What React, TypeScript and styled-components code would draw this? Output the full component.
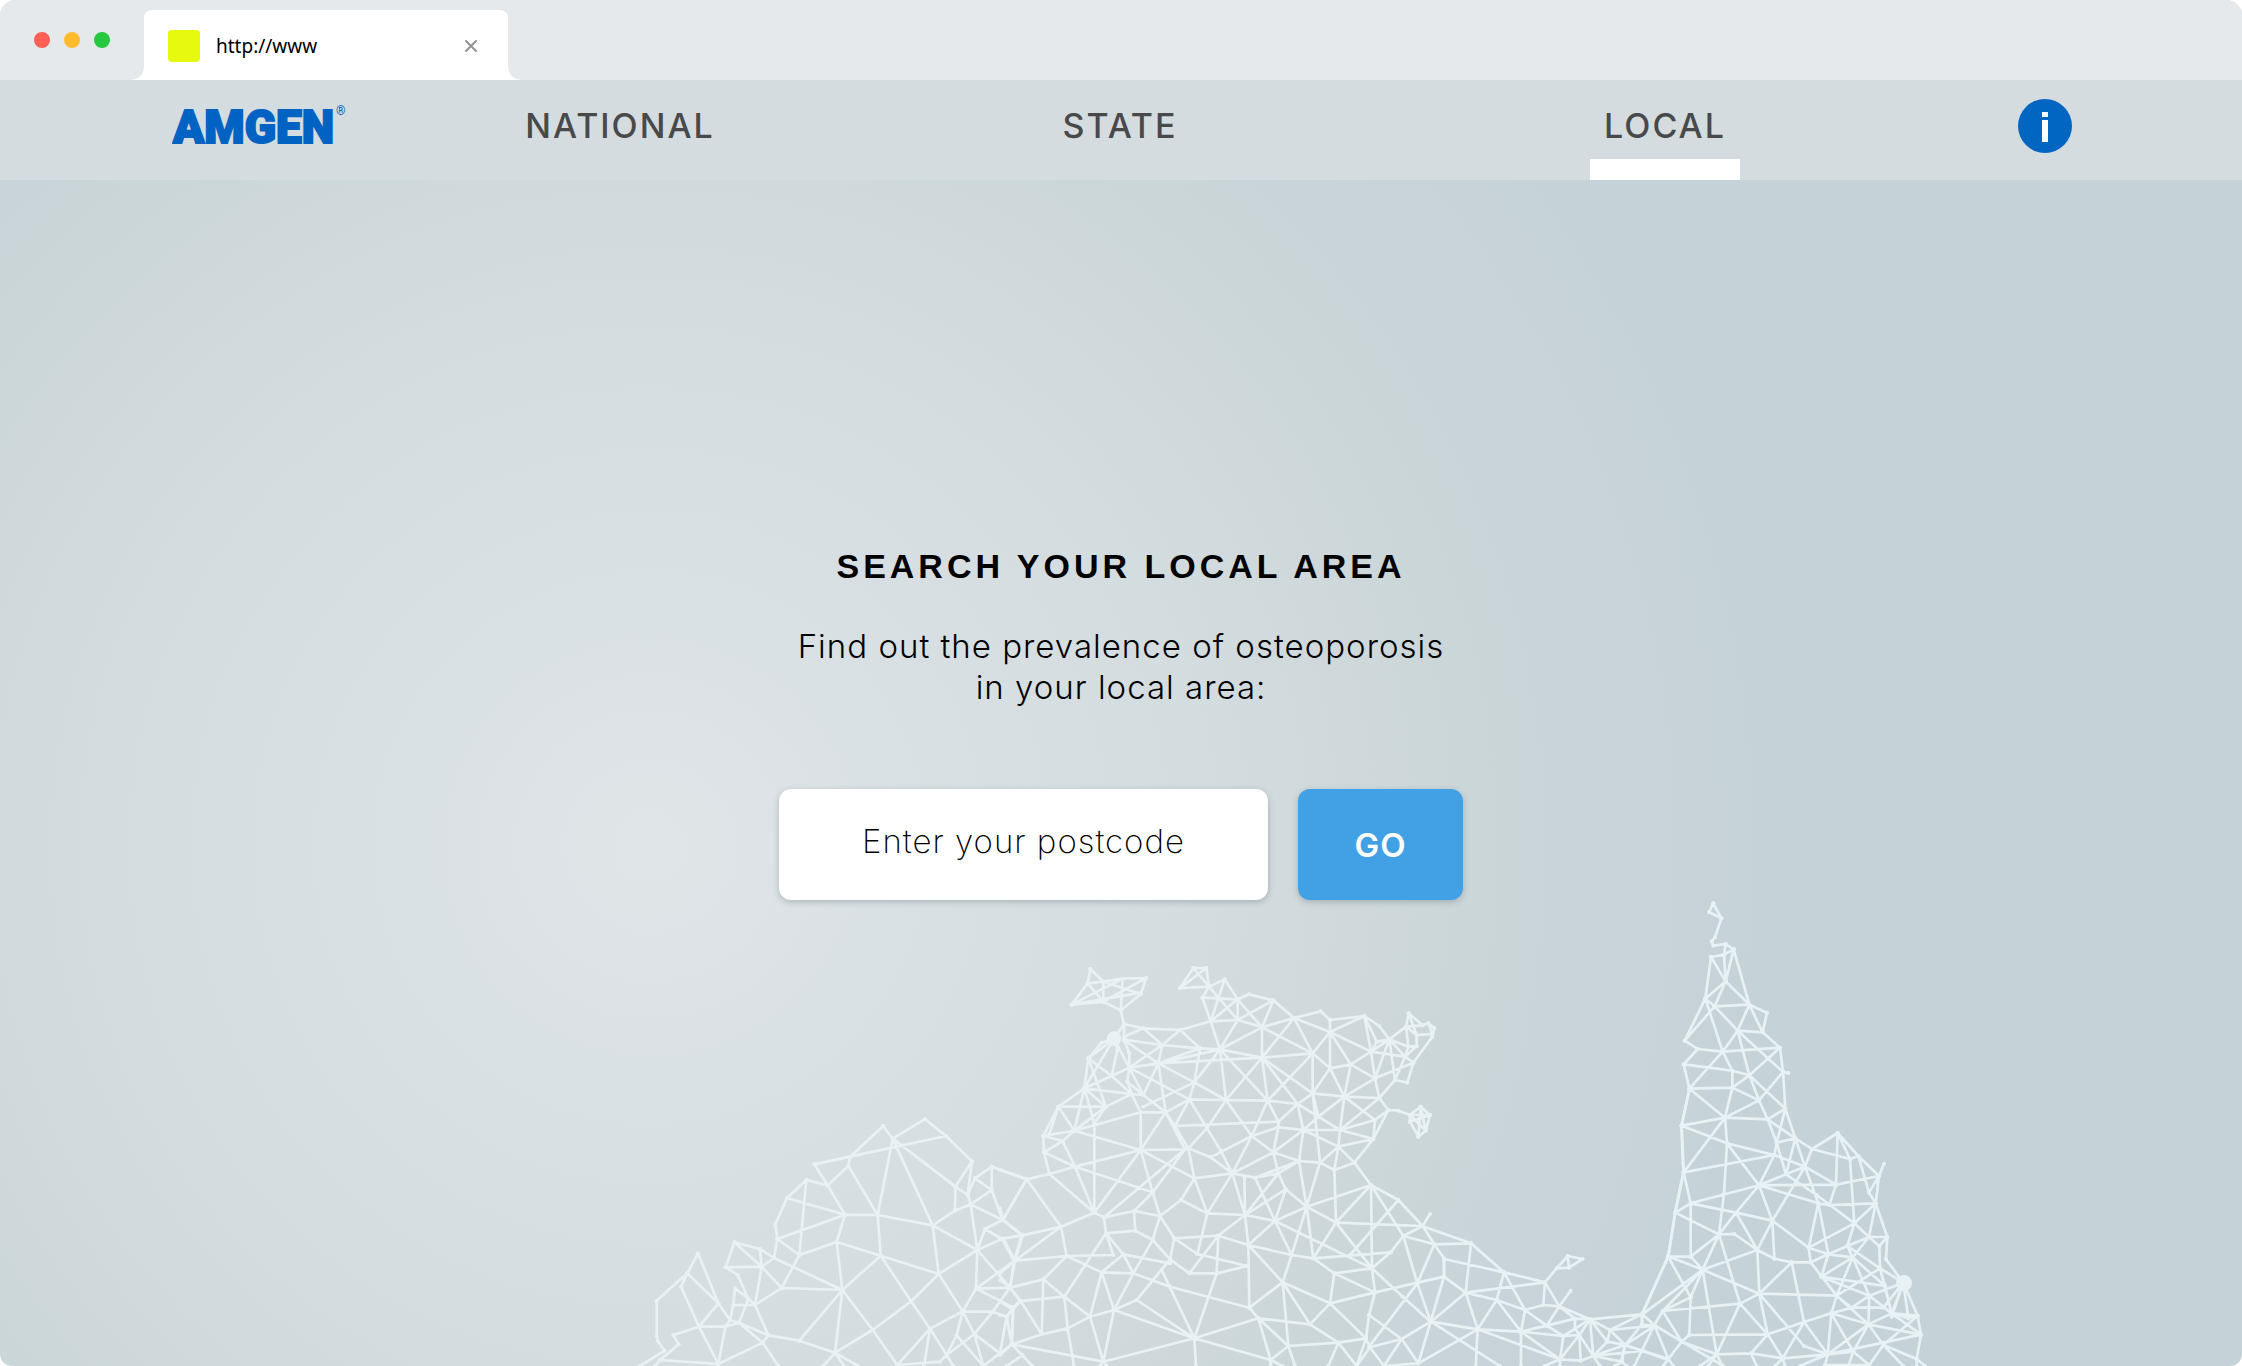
import React from "react";
import styled, { createGlobalStyle } from "styled-components";

const GlobalStyle = createGlobalStyle`
  *, *::before, *::after { box-sizing: border-box; }
  body { margin: 0; background: #ffffff; }
`;

const sans = `Inter, "Liberation Sans", Arial, sans-serif`;
const grotesk = `"Liberation Sans", Arial, sans-serif`;

const Window = styled.div`
  position: relative;
  display: flex;
  flex-direction: column;
  min-height: 100vh;
  overflow: hidden;
  border-radius: 16px 16px 12px 12px;
  background: radial-gradient(
    circle 50vw at 29% 62%,
    #e0e5e8 0%,
    #d9e0e3 25%,
    #d3dcdf 50%,
    #cbd6d8 74%,
    #c9d4da 84%,
    #c5d2d8 100%
  );
  font-family: ${sans};
  color: #000000;
`;

const TabStrip = styled.div`
  display: flex;
  align-items: flex-end;
  height: 80px;
  padding-left: 34px;
  background: #e5e9ec;
`;

const Lights = styled.div`
  display: flex;
  gap: 14px;
  align-self: center;
  width: 110px;
`;

const Light = styled.span<{ $color: string }>`
  width: 16px;
  height: 16px;
  border-radius: 50%;
  background: ${(p) => p.$color};
`;

const Tab = styled.div`
  position: relative;
  display: flex;
  align-items: center;
  gap: 16px;
  width: 364px;
  height: 70px;
  padding: 20px 30px 18px 24px;
  border-radius: 8px 8px 0 0;
  background: #ffffff;

  &::before,
  &::after {
    content: "";
    position: absolute;
    bottom: 0;
    width: 12px;
    height: 12px;
  }
  &::before {
    right: 100%;
    background: radial-gradient(circle at 0 0, transparent 11px, #ffffff 12px);
  }
  &::after {
    left: 100%;
    background: radial-gradient(circle at 100% 0, transparent 11px, #ffffff 12px);
  }
`;

const Favicon = styled.span`
  width: 32px;
  height: 32px;
  border-radius: 4px;
  background: #e6f90f;
`;

const TabTitle = styled.span`
  flex: 1;
  font-family: "Noto Sans", "Open Sans", sans-serif;
  font-size: 19px;
  line-height: 28px;
`;

const IconButton = styled.button`
  display: flex;
  padding: 0;
  border: 0;
  background: none;
  cursor: pointer;
`;

const Header = styled.header`
  display: grid;
  grid-template-columns: 198fr 500fr 500fr 590fr 112fr;
  align-items: stretch;
  height: 100px;
  padding: 0 170px 0 172px;
  background: #d5dcdf;
`;

const LogoLink = styled.a`
  display: flex;
  align-items: center;
  padding-bottom: 8px;
`;

const Nav = styled.nav`
  display: contents;
`;

const NavLink = styled.a<{ $active?: boolean }>`
  justify-self: center;
  display: flex;
  align-items: center;
  padding: 12px 14px 0;
  border-bottom: 21px solid ${(p) => (p.$active ? "#ffffff" : "transparent")};
  color: #48494a;
  font-size: 34px;
  font-weight: 500;
  letter-spacing: 2px;
  text-decoration: none;
`;

const InfoButton = styled(IconButton)`
  justify-self: end;
  align-self: center;
  padding-bottom: 8px;
`;

const Main = styled.main`
  position: relative;
  z-index: 1;
  display: flex;
  flex-direction: column;
  align-items: center;
  padding: 366px 24px 48px;
  text-align: center;
`;

const Title = styled.h1`
  margin: 0;
  font-family: ${grotesk};
  font-size: 34px;
  font-weight: 700;
  line-height: 40px;
  letter-spacing: 4px;
`;

const Intro = styled.p`
  margin: 40px 0 0;
  font-size: 33px;
  font-weight: 300;
  line-height: 41px;
  letter-spacing: 1px;
`;

const SearchForm = styled.form`
  display: flex;
  gap: 30px;
  margin-top: 81px;
`;

const Postcode = styled.input`
  width: 489px;
  height: 111px;
  padding: 0 24px 8px;
  border: 0;
  border-radius: 12px;
  background: #ffffff;
  box-shadow: 0 2px 6px rgba(60, 80, 90, 0.3);
  font-family: ${sans};
  font-size: 33px;
  font-weight: 200;
  letter-spacing: 1px;
  text-align: center;
  color: #000000;

  &::placeholder {
    color: #000000;
    opacity: 1;
  }
`;

const GoButton = styled.button`
  width: 165px;
  height: 111px;
  border: 0;
  border-radius: 12px;
  background: #42a0e4;
  box-shadow: 0 2px 6px rgba(60, 80, 90, 0.3);
  font-family: ${sans};
  font-size: 33px;
  font-weight: 600;
  letter-spacing: 1px;
  color: #ffffff;
  cursor: pointer;
`;

const MapArt = styled.svg`
  position: absolute;
  left: 0;
  bottom: 0;
  width: 100%;
  height: auto;
  fill: none;
  stroke: #e8f2f5;
  stroke-width: 8;
  stroke-linejoin: round;

  path {
    marker: url(#node);
  }
`;

const west =
  "M30,918L104,872L83,843L80,828L80,722L138,670L172,640L204,580L265,730L300,780" +
  "M172,640L153,680L207,800L265,730L172,640" +
  "M75,918L90,900L146,853L130,825L207,800L286,800L327,788L415,826L508,842L615,878L685,918" +
  "M90,900L265,912L207,800M265,912L286,800L300,780M265,912L398,848L327,788M398,848L445,918M398,848L415,826L375,735" +
  "M300,780L310,735L315,685L355,716L375,735L310,735M355,716L327,788L300,780M355,716L323,645L287,622L313,547L390,567L432,594" +
  "M287,622L395,620L313,547M390,567L395,620L432,594M395,620L455,684L375,735L395,620" +
  "M432,594L442,537L436,492L471,414L529,360L593,376L553,313L660,290L760,198L788,236L885,177L948,228L1026,304L1013,405" +
  "M660,290L948,228M660,290L655,318L593,376L645,464L471,414M645,464L442,537L508,585L529,360M655,318L743,465L645,464" +
  "L620,546L508,585L455,684L637,690L432,594M620,546L637,690M620,546L752,587L743,465L908,496L788,236L743,465" +
  "M788,236L976,380L1026,304M976,380L1013,405L1022,433L975,452L976,380M975,452L908,496L1042,570L1022,433" +
  "M908,496L926,642L752,587L637,690L508,842M637,690L615,878M637,690L728,810L615,878L580,918M615,878L642,918" +
  "M752,587L843,724L926,642M843,724L728,810L802,915M843,724L900,806L998,754L926,642L1042,570M802,915L900,806L882,918" +
  "M900,806L950,885M802,915L930,905L950,885L980,826L998,754L1038,686L1042,570" +
  "M1013,405L1035,355L1085,320L1190,357M1085,320L1085,390L1035,355M1085,390L1022,433L1118,480L1085,390M1118,480L1190,357" +
  "M1118,480L1065,507L1042,570L1116,537L1065,507M1118,480L1175,525L1116,537L1152,603L1175,525" +
  "M1152,603L1038,686L1140,683L1042,570M1152,603L1140,683L1170,722L1150,742L1038,686" +
  "M1140,683L1088,755L998,754L1033,822L1088,755L1130,770L1150,742L1145,850L1130,770L1110,880L1033,822L950,885" +
  "M980,826L1060,918L1033,822M950,885L970,918M1060,918L1145,853";

const north =
  "M271,87L310,125L368,116L438,114L423,162L362,211L310,185L215,194L263,130L271,87M263,130L310,125L310,185L263,130" +
  "M215,194L368,116L362,211L372,252M310,125L423,162M310,185L438,114M215,194L423,158" +
  "M540,144L580,84L619,84L627,140L540,144L619,84M580,84L627,140" +
  "M627,140L674,118L713,178L607,173L627,140L713,240M607,173L632,244L674,118" +
  "M632,244L713,178L747,163L820,181L882,234L962,214L990,240L1093,228L1138,258L1168,298" +
  "M713,178L713,240L632,244M713,240L820,181L786,262L713,178M713,240L786,262L882,234M713,240L660,328L632,244" +
  "M660,328L786,262L786,353L660,328M786,353L938,340L786,262M786,353L882,234L938,340L990,276L882,234M990,240L990,276L1093,228" +
  "M990,276L1113,335L1093,228L1130,305L1168,298L1113,335L1130,305M938,340L990,385L990,276L1052,373L990,385M1052,373L1113,335L1125,415L1052,373" +
  "M1113,335L1215,350L1168,298L1218,260L1226,220L1268,256L1285,250L1303,264L1297,290L1240,368L1222,428L1185,420L1138,474L1165,510L1195,512L1230,525" +
  "M1218,260L1250,285L1250,318L1215,350L1240,368M1226,220L1250,285L1297,282L1285,250M1218,260L1268,256M1168,298L1225,320L1250,318" +
  "M1168,298L1185,420L1215,350M1218,260L1225,320L1215,350M1168,298L1125,415L1240,368M1125,415L1138,474L1033,470L1125,415" +
  "M1052,373L1033,470L990,385L938,460L938,340M1033,470L938,460L786,353" +
  "M372,252L430,265L540,270L632,244M372,290L430,265L487,315L378,300M487,315L540,270L600,325L660,328M487,315L600,325" +
  "M487,315L475,370L372,300M487,315L388,383L475,370L600,325M475,370L660,328M475,370L786,353M475,370L583,427L600,325" +
  "M583,427L660,328L678,480L583,427L568,478L678,480M660,328L803,482L786,353L678,480L803,482L893,492L786,353" +
  "M938,340L803,482M893,492L938,460M475,370L497,517L568,478M475,370L430,465L388,383L568,478M583,427L430,500" +
  "M372,252L342,296L305,308L265,355L253,445L175,500L130,588L132,637L148,702L80,718L0,690" +
  "M372,252L372,300L388,340L388,383M342,296L265,355L335,408L352,330L342,296L253,445M265,355L318,500L253,445L335,408L388,383" +
  "M253,445L395,462L335,408M388,383L382,425L395,462L430,465L382,425M430,465L497,517M318,500L395,462L422,517L497,517" +
  "M342,296L388,383M175,500L318,500L223,572L175,500L148,583M253,445L223,572L130,588L188,603L132,637" +
  "M130,588L175,500M223,572L422,517M223,572L188,603L225,680L422,630L223,572M253,445L283,550L283,818L225,680L132,637M318,500L283,550" +
  "M422,517L422,630L497,517L525,558L568,478M497,517L555,628L422,630L583,715M225,680L148,702L283,818L422,630L458,757L225,680" +
  "M525,558L565,625L632,652L697,700M525,558L835,545M568,478L662,632L697,700M678,480L623,562L565,625" +
  "M678,480L755,588L803,482L835,545L893,492L910,570L835,562L755,588L632,652M835,545L835,562L820,637L755,588L697,700L820,637L910,570L955,530L893,492" +
  "M938,460L955,530L1020,570L1033,470L955,530M1033,470L1125,540L1120,597L1165,510L1125,540L1020,570L1120,597L1015,620L1020,570L910,570" +
  "M1138,474L1020,570M1015,620L910,570L897,663L820,637L835,700L765,713L697,700M938,460L960,668L897,663M960,668L1015,620L1003,690L960,668" +
  "M1015,620L1063,668L1003,690M1120,597L1063,668L1113,735L1195,780L1268,858M835,700L857,748L920,800L897,663L835,700M897,663L765,713" +
  "M857,748L735,825L835,700M960,668L920,800L1113,735M1003,690L1008,848L920,800M1113,735L1008,848L1268,858M1113,735L1116,985" +
  "M1113,735L1210,888L1268,858L1290,822M1195,780L1050,945M1268,858L1303,913L1210,888L1172,937L1116,985" +
  "M1303,913L1332,955L1332,1010M1303,913L1252,1030L1107,1220M1210,888L1252,1030L1292,1145L1332,1010L1125,1057M1116,985L1208,1070L1292,1145" +
  "M1008,848L1116,985M920,800L940,955L1008,848M920,800L825,843L735,825M857,748L825,843L765,713M825,843L875,945L920,800" +
  "M825,843L1116,985M825,843L745,915L655,887L735,825L622,820L697,700L583,715M697,700L735,825L745,915M733,710L735,825" +
  "M565,625L583,715L622,820L543,780L583,715M543,780L480,828L458,757L555,628M622,820L592,942" +
  "M458,757L402,813L312,832L283,818L183,860L68,886L0,897M480,828L402,813L406,872L318,880L312,832M480,828L523,895L655,887" +
  "M480,828L458,900L400,1000M406,872L458,900L510,958M312,832L555,628" +
  "M523,895L510,958L568,1000L650,1000L742,978L592,942L523,895M655,887L568,1000M655,887L650,1000L583,1195M745,915L748,1103" +
  "M510,970L370,943L318,880L340,945L200,948L183,860L80,718L8,840M183,860L45,962L10,895M200,948L130,1018L193,1070M125,1183L130,1018L30,1043" +
  "M200,948L45,962L68,886L10,840L0,805M45,962L30,1043M0,1000L45,962M318,880L193,1070L270,1130L305,997L200,948" +
  "M305,997L370,943L400,1000L305,997L342,1110L270,1130L203,1165L193,1070L62,1083L30,1043L0,1020M62,1083L125,1183M62,1083L38,1108L0,1085" +
  "M38,1108L20,1130L0,1125M38,1108L36,1215L20,1130M0,1245L36,1213L125,1183L203,1165L222,1278M36,1213L97,1278M36,1213L310,1265L270,1130" +
  "M310,1265L342,1110L410,1080L510,958M342,1110L583,1195L410,1080M400,1000L342,1110M370,943L400,1000L510,1040L748,1103" +
  "M485,990L583,1195L310,1265L320,1278M583,1195L588,1278M583,1195L775,1135L748,1103M583,1195L812,1260M68,1245L20,1278M310,1265L300,1278" +
  "M745,915L875,945L940,955L1172,937M745,915L848,1027L875,945M748,1103L848,1027L930,1153L775,1135L812,1260L848,1278M812,1260V1278" +
  "M775,1135L865,1218L848,1027L990,1090L1125,1057L1003,1000L940,955M1003,1000L1116,985L1125,1057L1107,1125L1098,1195L1110,1222" +
  "M1003,1000L990,1090L930,1153L1015,1208L865,1218L812,1260M990,1090L1098,1195M865,1218L885,1278M1015,1208L1098,1195L1070,1278M985,1278L1015,1208L1070,1278" +
  "M1110,1222L1070,1278M1110,1222L1152,1278L1205,1197L1107,1125M1110,1222L1205,1197L1292,1145M1205,1197L1255,1270L1292,1145" +
  "M1255,1270L1152,1278" +
  "M1230,525L1262,500L1290,525L1277,572L1255,590L1230,545L1230,525L1290,525L1230,545M1262,500L1255,590M1262,500L1277,572L1230,525";

const gulf =
  "M186,438L333,490L432,577L555,607L598,679L690,718L845,703L926,528L945,398L970,277L964,137L990,20" +
  "M223,493L333,490L317,638L252,590L252,537L432,577L410,660L317,638L213,725L353,748L317,638" +
  "M353,748L175,850M213,725L420,858M317,638L555,607L550,675L598,679M432,577L495,690L550,675M410,660L495,690L483,755L410,660L353,748L483,755L610,768" +
  "M483,755L600,838M495,690L560,737L598,679M483,755L560,737L645,716L645,745L658,765L610,768L560,737M610,768L600,838L353,748L347,858M483,755V858" +
  "M645,716L690,718L658,765L700,828L690,718L610,768M658,765L600,838L553,858M658,765L662,842L600,838V858M700,828L662,842" +
  "M598,679L645,716M632,632L598,679M555,607L590,565L623,528L668,537L627,563L590,565M623,528L627,563" +
  "M690,718L742,785L750,750L690,718M795,795L742,785L700,828L795,795L750,750L885,737" +
  "M700,828L785,845L795,795L925,840M700,828L720,858M785,845L765,858M785,845L800,858M850,812L700,828M750,750L845,703L845,735L885,737L795,795L845,735";

const cape =
  "M340,70L327,96L364,115L340,70M364,115L345,172L335,184L340,197L377,192L401,208L448,374L501,398L488,457L540,503L549,576L565,579" +
  "M549,576L556,686L586,775L636,807L713,759L775,828L837,888L852,851M837,888L827,970L862,1071L858,1138L910,1208L953,1307L963,1364L950,1437L975,1458M950,1437V1458" +
  "M401,208L372,224L333,231L316,356L254,482L293,507L251,553L268,626L245,737L251,877L226,998L204,1129L127,1303" +
  "M377,192L372,224L377,304L401,208M377,304L333,231M316,356L377,304L448,374L344,379L316,356M377,304L344,379L254,482" +
  "M316,356L368,515L413,452L448,374L488,457L413,452L344,379M293,507L368,515L540,503L448,586L413,452L549,576" +
  "M368,515L268,626L397,623L397,572L251,553M368,515L397,572L448,586L397,623L477,661L448,586L556,686M549,576L477,661L375,713L397,623" +
  "M268,626L375,713L245,737L381,790L375,713L503,718L477,661M503,718L556,686L530,788L586,775L503,718L530,788L558,883L586,775L615,860L523,825L381,790L477,916L558,883" +
  "M251,877L375,713M251,877L523,825L530,788M251,877L272,970L226,998L357,1063M381,790L372,940L357,1063" +
  "M523,825L477,916L272,970L408,998L477,916L517,1022L408,998L357,1063L403,1062L472,1110L408,998" +
  "M272,970L272,1130L204,1129L308,1169L272,1130L357,1063L308,1169L472,1110L517,1022L626,1103L685,1123M517,1022L523,1136L472,1110L478,1241L575,1147L523,1136" +
  "M517,1022L615,860L636,807L750,837L775,828M615,860L655,970M615,860L558,883L650,945L763,1030L827,970L688,975L655,970L477,916L708,914L713,759L750,837L763,1030L626,1103L655,970L685,1123" +
  "L758,1132L742,1098L763,1030L807,1071L827,970M708,914L615,860M708,914L837,888M708,914L688,975M775,828L807,938L827,970M807,938L837,888" +
  "M807,1071L862,1071L838,1098L807,1071L742,1098L840,1165L838,1098M807,1071L758,1132L664,1190L685,1123L632,1147L575,1147L612,1326L694,1300L710,1247L478,1241L420,1271" +
  "M308,1169L478,1241L503,1363L420,1271L188,1293L308,1169L272,1252L204,1129M127,1303L308,1169L350,1423L420,1271L357,1063" +
  "M272,1252L188,1293L163,1335L127,1303V1335H163M272,1252L268,1365L503,1363L548,1435L612,1326L503,1363L453,1420L350,1423" +
  "M478,1241L612,1398L683,1423L612,1326M626,1103L632,1147L710,1247L758,1132L808,1247L664,1190M758,1132L855,1218M685,1123L742,1098" +
  "M710,1247L805,1333L694,1300L683,1423L805,1333L808,1247L755,1283L710,1247L840,1165M808,1247L910,1208M755,1283L850,1283L910,1208L875,1300L808,1247M694,1300L755,1283" +
  "M664,1190L855,1218L840,1165L910,1208M840,1165L875,1300L953,1307M855,1218L875,1300L925,1315L910,1208M925,1315L953,1307L850,1395L805,1333L875,1300M805,1333L963,1364L683,1423" +
  "M875,1300L963,1364M910,1208L875,1310M805,1333L760,1415L683,1423L550,1435L453,1420L470,1458M694,1300L760,1415L808,1455L850,1395L950,1437M850,1395L910,1458M760,1415L745,1458" +
  "M683,1423L675,1458M683,1423L600,1458M675,1455H808M548,1435L555,1458M548,1435L525,1458M350,1423L368,1458M350,1423L325,1458" +
  "M163,1335L245,1385L350,1423L300,1458M188,1293L245,1385L205,1437L163,1335M245,1385L268,1365M245,1385L370,1458M163,1335L103,1458" +
  "M205,1437L75,1395L65,1440M205,1437L190,1458M205,1437L220,1458";

function CoastMesh() {
  return (
    <MapArt viewBox="0 0 6726 1458" aria-hidden="true">
      <defs>
        <marker id="node" markerUnits="userSpaceOnUse" markerWidth="14" markerHeight="14" refX="7" refY="7">
          <circle cx="7" cy="7" r="6" fill="#e8f2f5" stroke="none" />
        </marker>
      </defs>
      <g transform="translate(1890 540)">
        <path d={west} />
      </g>
      <g transform="translate(3000 180)">
        <path d={north} />
        <circle cx="342" cy="296" r="18" fill="#e8f2f5" />
      </g>
      <g transform="translate(4080 600)">
        <path d={gulf} />
      </g>
      <g transform="translate(4800 0)">
        <path d={cape} />
        <circle cx="912" cy="1209" r="20" fill="#e8f2f5" />
      </g>
    </MapArt>
  );
}

function Logo() {
  return (
    <svg width="176" height="56" viewBox="0 0 176 56" role="img" aria-label="Amgen">
      <g fill="#0063c3" fontFamily="Roboto, Arial, sans-serif">
        <text x="1" y="45" fontSize="46" fontWeight="900" stroke="#0063c3" strokeWidth="2">
          AMGEN
        </text>
        <text x="164" y="17" fontSize="12">
          ®
        </text>
      </g>
    </svg>
  );
}

export default function App() {
  return (
    <Window>
      <GlobalStyle />
      <TabStrip>
        <Lights>
          <Light $color="#ff5f57" />
          <Light $color="#febc2e" />
          <Light $color="#28c840" />
        </Lights>
        <Tab>
          <Favicon />
          <TabTitle>http://www</TabTitle>
          <IconButton type="button" aria-label="Close tab">
            <svg width="14" height="14" viewBox="0 0 14 14" stroke="#929292" strokeWidth="2" strokeLinecap="round">
              <path d="M2 2L12 12M12 2L2 12" />
            </svg>
          </IconButton>
        </Tab>
      </TabStrip>
      <Header>
        <LogoLink href="#home">
          <Logo />
        </LogoLink>
        <Nav>
          <NavLink href="#national">NATIONAL</NavLink>
          <NavLink href="#state">STATE</NavLink>
          <NavLink href="#local" $active aria-current="page">
            LOCAL
          </NavLink>
        </Nav>
        <InfoButton type="button" aria-label="Information">
          <svg width="54" height="54" viewBox="0 0 54 54">
            <circle cx="27" cy="27" r="27" fill="#0066c2" />
            <path d="M24 13h6v5h-6zM24 21h6v22h-6z" fill="#ffffff" />
          </svg>
        </InfoButton>
      </Header>
      <Main>
        <Title>SEARCH YOUR LOCAL AREA</Title>
        <Intro>
          Find out the prevalence of osteoporosis
          <br />
          in your local area:
        </Intro>
        <SearchForm onSubmit={(e) => e.preventDefault()}>
          <Postcode type="text" aria-label="Postcode" placeholder="Enter your postcode" />
          <GoButton type="submit">GO</GoButton>
        </SearchForm>
      </Main>
      <CoastMesh />
    </Window>
  );
}
